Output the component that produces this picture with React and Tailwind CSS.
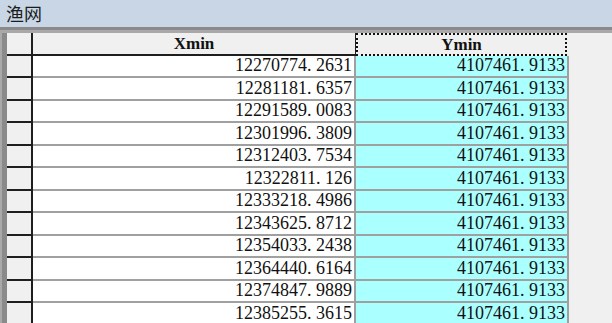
import React from "react";

const xmins = [
  "12270774. 2631",
  "12281181. 6357",
  "12291589. 0083",
  "12301996. 3809",
  "12312403. 7534",
  "12322811. 126",
  "12333218. 4986",
  "12343625. 8712",
  "12354033. 2438",
  "12364440. 6164",
  "12374847. 9889",
  "12385255. 3615",
];

const num = { fontFamily: '"Liberation Serif", serif' };
const head = { fontFamily: '"Liberation Serif", serif' };

const App = () => {
  return (
    <div className="w-[612px] h-[323px] overflow-hidden bg-[#f0f0f0] flex flex-col">
      <div
        className="h-[27px] shrink-0 bg-[#c8d6e5] pl-[6px] flex items-center text-[18px] text-[#1c1c1c]"
        style={{ fontFamily: '"Noto Sans CJK SC", sans-serif' }}
      >
        渔网
      </div>
      <div className="h-[3px] shrink-0 bg-[#8a8a8a]" />
      <div className="h-[3px] shrink-0 bg-[#a9a9a9]" />
      <div className="flex flex-1">
        <div className="w-[2px] bg-[#a9a9a9]" />
        <div className="w-[5px] bg-[#8a8a8a]" />
        <div className="flex flex-col">
          <div className="flex h-[22.5px] shrink-0">
            <div className="w-[26px] bg-[#f0f0f0] border-r-2 border-b-2 border-[#1e1e1e]" />
            <div
              className="w-[323px] bg-[#f0f0f0] border-r border-b-2 border-[#1e1e1e] flex items-center justify-center font-bold text-[17px] text-[#111]"
              style={head}
            >
              Xmin
            </div>
            <div
              className="w-[211px] bg-[#f0f0f0] border-2 border-dotted border-[#111] flex items-center justify-center font-bold text-[17px] text-[#111]"
              style={head}
            >
              Ymin
            </div>
          </div>
          {xmins.map((x, i) => (
            <div key={i} className="flex h-[22.5px] shrink-0">
              <div className="w-[26px] bg-[#f0f0f0] border-r-2 border-b-2 border-[#1e1e1e]" />
              <div
                className="w-[323px] bg-white border-r-2 border-b-2 border-[#a0a0a0] flex items-center justify-end pr-[2px] text-[18px] text-[#111] whitespace-pre"
                style={num}
              >
                {x}
              </div>
              <div
                className="w-[213px] bg-[#aaffff] border-r-2 border-b-2 border-[#a0a0a0] flex items-center justify-end pr-[2px] text-[18px] text-[#111] whitespace-pre"
                style={num}
              >
                4107461. 9133
              </div>
            </div>
          ))}
        </div>
      </div>
    </div>
  );
};

export default App;
